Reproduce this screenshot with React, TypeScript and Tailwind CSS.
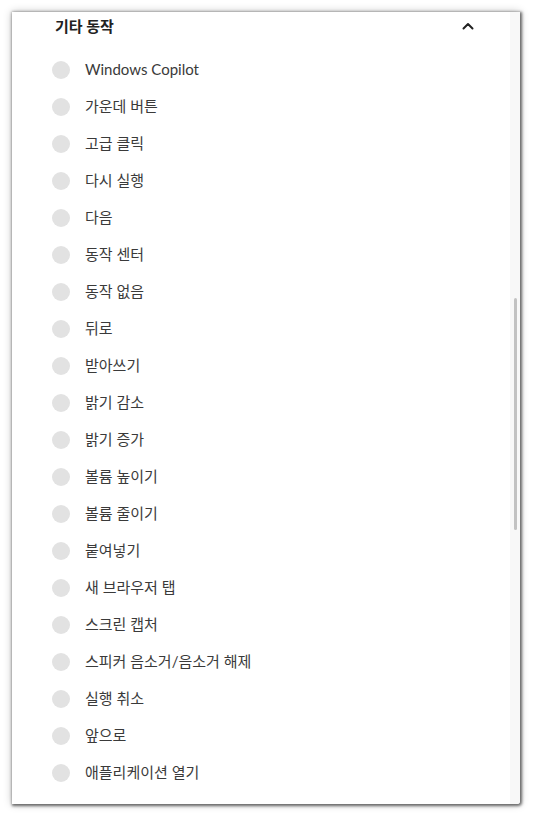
const items = [
  "Windows Copilot",
  "가운데 버튼",
  "고급 클릭",
  "다시 실행",
  "다음",
  "동작 센터",
  "동작 없음",
  "뒤로",
  "받아쓰기",
  "밝기 감소",
  "밝기 증가",
  "볼륨 높이기",
  "볼륨 줄이기",
  "붙여넣기",
  "새 브라우저 탭",
  "스크린 캡처",
  "스피커 음소거/음소거 해제",
  "실행 취소",
  "앞으로",
  "애플리케이션 열기",
];

function ChevronUp() {
  return (
    <svg width="12" height="8" viewBox="0 0 12 8" fill="none">
      <path d="M1.5 6.5 L6 2 L10.5 6.5" stroke="#222" strokeWidth="2" strokeLinecap="round" strokeLinejoin="round" />
    </svg>
  );
}

export default function App() {
  return (
    <div className="h-[818px] w-[534px] bg-white pl-[12px] pt-[12px] font-['Lato','Noto_Sans_CJK_KR',sans-serif]">
      <div className="flex h-[792px] w-[508px] overflow-hidden rounded-br-[3px] bg-white shadow-[1px_1px_3px_1px_rgba(0,0,0,0.55),0_0_8px_rgba(0,0,0,0.25)]">
        <div className="flex-1">
          <div className="mb-[11px] flex h-[28px] items-center justify-between pl-[43px] pr-[36px]">
            <span className="text-[15px] font-bold text-[#222]">기타 동작</span>
            <ChevronUp />
          </div>
          <ul>
            {items.map((label) => (
              <li key={label} className="flex h-[37px] items-center pl-[40px]">
                <span className="h-[18px] w-[18px] rounded-full bg-[#e2e2e2]" />
                <span className="ml-[15px] text-[15px] text-[#3a3a3a]">{label}</span>
              </li>
            ))}
          </ul>
        </div>
        <div className="flex w-[10px] flex-col items-center bg-[#f8f8f8]">
          <div className="mt-[286px] h-[232px] w-[3px] rounded-full bg-[#c2c2c2]" />
        </div>
      </div>
    </div>
  );
}
